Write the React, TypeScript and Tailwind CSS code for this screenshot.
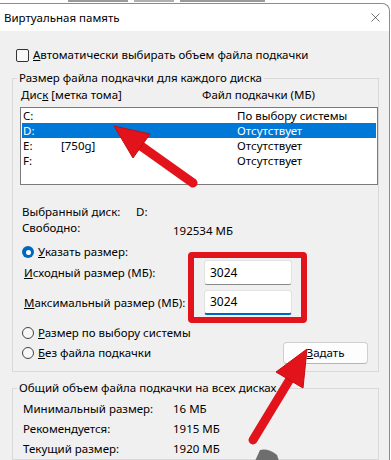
import { X } from "lucide-react";

const font = { fontFamily: '"Noto Sans", "Open Sans", sans-serif' };

function Radio({ checked }: { checked?: boolean }) {
	if (checked)
		return (
			<span className="flex h-[12px] w-[12px] shrink-0 items-center justify-center rounded-full bg-[#0067c0]">
				<span className="h-[5px] w-[5px] rounded-full bg-white" />
			</span>
		);
	return <span className="h-[12px] w-[12px] shrink-0 rounded-full border border-[#444] bg-[#f7f7f7]" />;
}

const drives = [
	{ d: "C:", label: "", size: "По выбору системы" },
	{ d: "D:", label: "", size: "Отсутствует", selected: true },
	{ d: "E:", label: "[750g]", size: "Отсутствует" },
	{ d: "F:", label: "", size: "Отсутствует" },
];

const totals = [
	["Минимальный размер:", "16 МБ"],
	["Рекомендуется:", "1915 МБ"],
	["Текущий размер:", "1920 МБ"],
];

export default function App() {
	return (
		<div className="relative h-[460px] w-[391px] overflow-hidden bg-white text-[11.5px] text-black" style={font}>
			{/* edge of the window behind the dialog */}
			<div className="flex h-[3px] items-start gap-[6px] pl-[68px]">
				<div className="h-[2px] w-[60px] bg-[#9a9a9a]" />
				<div className="h-[2px] w-[40px] bg-[#b0b0b0]" />
				<div className="h-[2px] w-[85px] bg-[#9a9a9a]" />
			</div>

			<div className="-ml-px w-[391px] rounded-tr-[8px] border-t border-r border-[#8c8c8c] bg-[#f0f0f0]">
				<div className="flex h-[27px] items-center justify-between rounded-tr-[8px] bg-white pl-[5px] pr-[6px]">
					<span className="leading-none">Виртуальная память</span>
					<X size={15} strokeWidth={1} className="text-[#222]" />
				</div>

				<div className="pb-[20px]">
					<div className="ml-[17px] mt-[17px] flex h-[14px] items-center gap-[4px]">
						<span className="h-[13px] w-[13px] rounded-[2px] border border-[#333] bg-[#f8f8f8]" />
						<span>
							<span className="underline">А</span>втоматически выбирать объем файла подкачки
						</span>
					</div>

					<fieldset className="ml-[13px] mt-[8px] w-[367px] border border-[#d9d9d9] pb-[7px] pl-[8px]">
						<legend className="-ml-[4px] px-[2px] leading-[16px]">Размер файла подкачки для каждого диска</legend>
						<div className="mt-px flex h-[16px] items-center">
							<span className="w-[181px]">
								Дис<span className="underline">к</span> [метка тома]
							</span>
							<span>Файл подкачки (МБ)</span>
						</div>

						<div className="-ml-px mt-[4px] h-[78px] w-[358px] border border-[#7a7a7a] bg-white">
							{drives.map((r) => (
								<div
									key={r.d}
									className={`mx-px grid h-[15px] grid-cols-[38px_176px_1fr] items-center pl-px leading-[15px] ${
										r.selected ? "bg-[#0078d7] text-white" : ""
									}`}
								>
									<span>{r.d}</span>
									<span>{r.label}</span>
									<span>{r.size}</span>
								</div>
							))}
						</div>

						<div className="ml-px mt-[19px] flex h-[16px] items-center">
							<span className="w-[114px]">Выбранный диск:</span>
							<span>D:</span>
						</div>
						<div className="ml-px flex h-[16px] items-center">
							<span className="w-[151px]">Свободно:</span>
							<span className="pt-[5px]">192534 МБ</span>
						</div>

						<div className="ml-px mt-[8px] flex h-[16px] items-center gap-[4px]">
							<Radio checked />
							<span>
								<span className="underline">У</span>казать размер:
							</span>
						</div>
						<div className="ml-[3px] flex h-[25px] items-center">
							<span className="w-[180px]">
								<span className="underline">И</span>сходный размер (МБ):
							</span>
							<div className="flex h-[25px] w-[88px] items-center rounded-[3px] border border-[#e2e2e2] border-b-[#8a8a8a] bg-white pl-[5px] text-[12px]">
								3024
							</div>
						</div>
						<div className="ml-[3px] mt-[5px] flex h-[25px] items-center">
							<span className="w-[180px]">
								<span className="underline">М</span>аксимальный размер (МБ):
							</span>
							<div className="flex h-[25px] w-[88px] items-center rounded-[3px] border border-[#e2e2e2] border-b-2 border-b-[#0067c0] bg-white pl-[5px] text-[12px]">
								3024
							</div>
						</div>

						<div className="ml-px mt-[10px] flex h-[16px] items-center gap-[4px]">
							<Radio />
							<span>
								<span className="underline">Р</span>азмер по выбору системы
							</span>
						</div>
						<div className="ml-px mt-px flex h-[22px] items-center justify-between pr-[10px]">
							<div className="flex items-center gap-[4px]">
								<Radio />
								<span>
									<span className="underline">Б</span>ез файла подкачки
								</span>
							</div>
							<button className="flex h-[22px] w-[85px] items-center justify-center rounded-[4px] border border-[#cfcfcf] border-b-[#b5b5b5] bg-[#fdfdfd]">
								<span>
									<span className="underline">З</span>адать
								</span>
							</button>
						</div>
					</fieldset>

					<fieldset className="ml-[13px] mt-[8px] w-[367px] border border-[#d9d9d9] pl-[10px]">
						<legend className="-ml-[6px] px-[2px] leading-[16px]">Общий объем файла подкачки на всех дисках</legend>
						<div className="mt-[3px]">
							{totals.map(([k, v]) => (
								<div key={k} className="flex h-[20px] items-center">
									<span className="w-[150px]">{k}</span>
									<span>{v}</span>
								</div>
							))}
						</div>
					</fieldset>
				</div>
			</div>

			{/* annotations */}
			<div className="absolute left-[188px] top-[252px] h-[71px] w-[119px] rounded-[4px] border-[6px] border-[#e3131b]" />
			<svg className="pointer-events-none absolute left-0 top-0" width="391" height="460" viewBox="0 0 391 460">
				<g fill="#e3131b" stroke="#c40c12" strokeWidth="1">
					<line x1="193" y1="183" x2="141" y2="146" stroke="#e3131b" strokeWidth="9" strokeLinecap="round" />
					<polygon points="114,126 150,134 133,158" />
					<line x1="253" y1="440" x2="290" y2="379" stroke="#e3131b" strokeWidth="9" strokeLinecap="round" />
					<polygon points="307,349 303,388 276,372" />
				</g>
				<path d="M255 461 L260 450 Q268 448 277 455 L279 461 Z" fill="#6e6e6e" />
			</svg>
		</div>
	);
}
